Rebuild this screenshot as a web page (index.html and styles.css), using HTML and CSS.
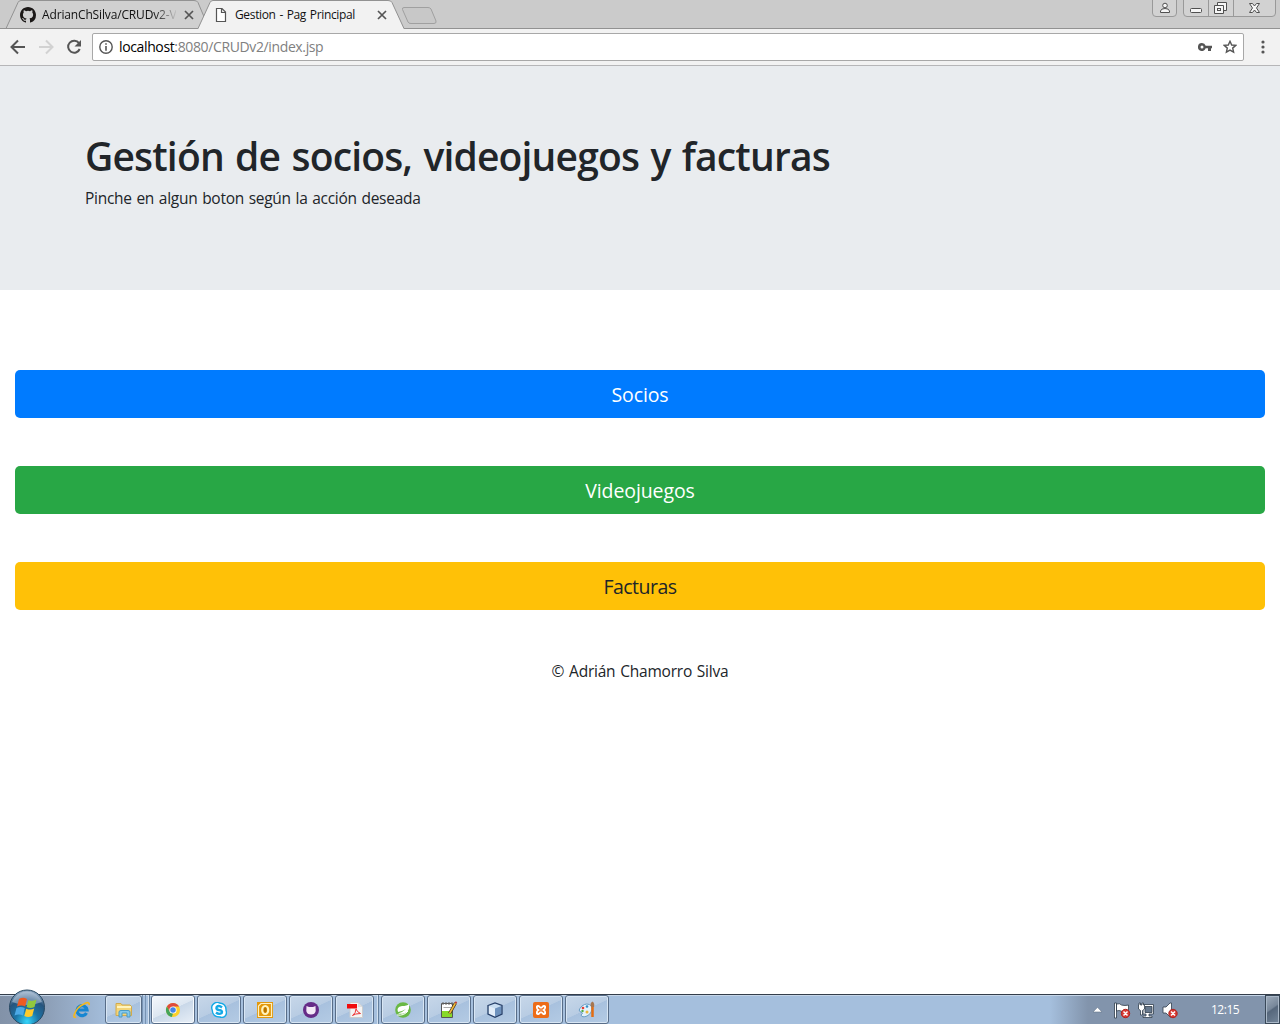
FILE: index.html
```html
<!DOCTYPE html>
<html lang="es">
<head>
<meta charset="utf-8">
<title>Gestion - Pag Principal</title>
<link rel="stylesheet" href="styles.css">
</head>
<body>
<header class="tabstrip">
  <svg class="tab-shapes" width="1280" height="29" viewBox="0 0 1280 29">
    <path d="M0 28.5H6L18 2.5Q19 .5 21 .5H194Q197 .5 198 2.5L209 28.5" fill="#d0d0d0" stroke="#929292"/>
    <path d="M0 28.5H1280" stroke="#929292"/>
    <path d="M198 29L210 2.5Q211 .5 213 .5H388Q391 .5 392 2.5L404 29Z" fill="#f2f2f2"/>
    <path d="M198 28.5L210 2.5Q211 .5 213 .5H388Q391 .5 392 2.5L404 28.5" fill="none" stroke="#929292"/>
    <path d="M404 7.5H428Q430 7.5 431 9L436 21Q436.500 23.500 434 23.500H411Q408.500 23.500 408 22L402.500 9.500Q402 7.500 404 7.500Z" fill="#c8c8c8" stroke="#a0a0a0"/>
    <g fill="#d2d2d2" stroke="#999">
      <path d="M1152.500 0V13Q1152.500 16.500 1156 16.500H1173Q1176.500 16.500 1176.500 13V0"/>
      <path d="M1183.500 0V13Q1183.500 16.500 1187 16.500H1272Q1275.500 16.500 1275.500 13V0M1208.500 0V16M1233.500 0V16"/>
    </g>
    <g fill="#f6f6f6" stroke="#505050">
      <circle cx="1165" cy="5.500" r="2.300"/><path d="M1160.500 12.500V11Q1161 8.500 1165 8.500T1169.500 11V12.500Z"/>
      <rect x="1190.500" y="8.500" width="11" height="4" rx="1"/>
      <path d="M1217.500 2.500H1226.500V10.500H1217.500Z"/><path d="M1214.500 5.500H1223.500V13.500H1214.500Z"/><rect x="1217.500" y="8.500" width="3" height="2"/>
      <path d="M1249.500 3.500H1252.500L1254.500 6L1256.500 3.500H1259.500L1256.500 8L1259.500 12.500H1256.500L1254.500 10L1252.500 12.500H1249.500L1252.500 8Z"/>
    </g>
  </svg>
  <div class="tab tab-first">
    <svg width="16" height="16" viewBox="0 0 16 16"><path fill="#1b1817" d="M8 0C3.580 0 0 3.580 0 8c0 3.540 2.290 6.530 5.470 7.590.4.070.55-.17.55-.38 0-.19-.01-.82-.01-1.490-2.010.37-2.530-.49-2.690-.94-.09-.23-.48-.94-.82-1.130-.28-.15-.68-.52-.01-.53.63-.01 1.080.58 1.230.82.72 1.210 1.870.87 2.330.66.07-.52.28-.87.51-1.070-1.780-.2-3.640-.89-3.640-3.950 0-.87.31-1.590.82-2.150-.08-.2-.36-1.020.08-2.120 0 0 .67-.21 2.200.82a7.500 7.500 0 014 0c1.530-1.040 2.200-.82 2.200-.82.44 1.100.16 1.920.08 2.120.51.56.82 1.270.82 2.150 0 3.070-1.870 3.750-3.650 3.950.29.25.54.73.54 1.480 0 1.070-.01 1.930-.01 2.200 0 .21.15.46.55.38A8.010 8.010 0 0016 8c0-4.420-3.580-8-8-8z"/></svg>
    <span class="tab-title faded">AdrianChSilva/CRUDv2-V</span>
    <svg class="close" width="10" height="10" viewBox="0 0 10 10"><path d="M1 1L9 9M9 1L1 9"/></svg>
  </div>
  <div class="tab tab-active">
    <svg width="16" height="16" viewBox="0 0 16 16"><path d="M3.500 1.500H9L12.500 5V14.500H3.500ZM8.500 1.500V5.500H12.500" fill="#fff" stroke="#555" stroke-width="1.200"/></svg>
    <span class="tab-title page-title">Gestion - Pag Principal</span>
    <svg class="close" width="10" height="10" viewBox="0 0 10 10"><path d="M1 1L9 9M9 1L1 9"/></svg>
  </div>
</header>
<nav class="toolbar">
  <svg class="nav-icons" width="92" height="36" viewBox="0 0 92 36"><g fill="none" stroke-width="2"><path d="M25 18H12M18 11.500L11.500 18L18 24.500" stroke="#555"/><path d="M39 18H52M46 11.500L52.500 18L46 24.500" stroke="#d2d2d2"/><path d="M79 14.200A6 6 0 1 0 79.700 20" stroke="#555"/></g><path d="M81 11V17.500H74.500Z" fill="#555"/></svg>
  <div class="address">
    <svg class="info" width="14" height="14" viewBox="0 0 14 14"><circle cx="7" cy="7" r="6.200" fill="none" stroke="#555" stroke-width="1.400"/><path d="M7 3.200V4.800M7 6V10.800" stroke="#555" stroke-width="1.600"/></svg>
    <span class="url">localhost<span class="path">:8080/CRUDv2/index.jsp</span></span>
    <svg class="key" width="14" height="8" viewBox="0 0 14 8"><path d="M4 0A4 4 0 1 0 7.700 5.300H10V8H13V5.300H14V2.700H7.700A4 4 0 0 0 4 0ZM4 2.500A1.500 1.500 0 1 1 4 5.500A1.500 1.500 0 1 1 4 2.500Z" fill="#555" fill-rule="evenodd"/></svg>
    <svg width="14" height="14" viewBox="0 0 14 14"><path d="M7 1.300L8.700 5L12.800 5.400L9.700 8.100L10.600 12.200L7 10.100L3.400 12.200L4.300 8.100L1.200 5.400L5.300 5Z" fill="none" stroke="#555" stroke-width="1.400"/></svg>
  </div>
  <svg class="menu-dots" width="4" height="14" viewBox="0 0 4 14" fill="#555"><circle cx="2" cy="2" r="1.600"/><circle cx="2" cy="7" r="1.600"/><circle cx="2" cy="12" r="1.600"/></svg>
</nav>
<main class="page">
  <section class="jumbotron">
    <h1><span>Gestión de socios, videojuegos y facturas</span></h1>
    <p><span>Pinche en algun boton según la acción deseada</span></p>
  </section>
  <div class="actions">
    <a class="btn primary"><span>Socios</span></a>
    <a class="btn success"><span>Videojuegos</span></a>
    <a class="btn warning"><span>Facturas</span></a>
  </div>
  <footer><span>© Adrián Chamorro Silva</span></footer>
</main>
<div class="taskbar">
  <svg class="orb" width="40" height="35" viewBox="0 0 40 35">
    <defs><radialGradient id="orb" cx=".5" cy=".9" r=".85"><stop offset="0" stop-color="#35d5fa"/><stop offset=".4" stop-color="#1b74a6"/><stop offset=".75" stop-color="#27547d"/><stop offset="1" stop-color="#8ba5bf"/></radialGradient></defs>
    <circle cx="20" cy="18.500" r="17.500" fill="url(#orb)" stroke="#284963"/>
    <path d="M5 13A16 16 0 0 1 35 13Q20 19 5 13Z" fill="#d4e1ed" opacity=".45"/>
    <path d="M12 10Q16 7.500 20 10L18.200 17.500Q14 15.500 10 17.500Z" fill="#ee5b23"/><path d="M21.500 11Q25 13 29.500 10.500L27.500 18Q23.500 20 19.600 18Z" fill="#91c83e"/><path d="M9.500 19Q13.500 17 17.800 19L16 26.500Q12 24.500 7.500 26.500Z" fill="#4ca9e6"/><path d="M19.200 19.700Q23.500 21.500 27.200 19.500L25.200 27Q21 29 17.300 27Z" fill="#ffcb2b"/>
  </svg>
  <div class="quick">
    <svg width="18" height="18" viewBox="0 0 18 18"><path d="M13.500 12A5 5 0 1 1 14 9H5" fill="none" stroke="#1686d2" stroke-width="3.200"/><path d="M3 16Q0 17 1.500 13Q4 6 11 3Q17 0 16 4" fill="none" stroke="#f3b71e" stroke-width="1.700"/></svg>
  </div>
  <div class="task explorer">
    <svg width="18" height="18" viewBox="0 0 18 18"><path d="M1 2.500H6L7 4H15L16.500 5.500V14.500H1Z" fill="#f3d478" stroke="#d2aa4b"/><path d="M2 6H16" stroke="#fff4be" stroke-width="2"/><path d="M4 16V11Q4 9.500 6 9.500H13Q15 9.500 15 11V16H12V12H7V16Z" fill="#83c9ec" stroke="#4a9bc6"/></svg>
  </div>
  <div class="stack two"></div>
  <div class="task current">
    <svg width="16" height="16" viewBox="0 0 16 16"><circle cx="8" cy="8" r="7" fill="#fcd12b"/><path d="M1.900 4.500A7 7 0 0 1 14.100 4.500H8L5 9.700Z" fill="#df4b3e"/><path d="M1.900 4.500L5 9.700L8 11.500L6.800 15A7 7 0 0 1 1.900 4.500Z" fill="#45a45a"/><circle cx="8" cy="8" r="3.600" fill="#fff"/><circle cx="8" cy="8" r="2.800" fill="#4486e8"/></svg>
  </div>
  <div class="task">
    <svg width="16" height="16" viewBox="0 0 16 16"><path d="M4.500 .7Q7 -.3 8.500 1Q15.500 1.500 15 8.500Q16.500 12 13.500 14.700Q11 16 9 15Q1.500 15 1.200 8Q-.7 3.200 4.500 .7Z" fill="#fff" stroke="#14a9e6" stroke-width="1.400"/><path d="M11 5.500Q8 3 5.700 5Q4.500 7.400 8 8Q12 8.500 10.700 11Q8 13 5 10.500" fill="none" stroke="#14a9e6" stroke-width="2.400"/></svg>
  </div>
  <div class="task">
    <svg width="16" height="16" viewBox="0 0 16 16"><path d="M0 0H16V16H0Z" fill="#e3980b"/><path d="M1.500 14.500V4L4 1.500H14.500V14.500Z" fill="none" stroke="#fff0bf" stroke-width="1.200"/><ellipse cx="8.200" cy="8" rx="3" ry="4" fill="none" stroke="#fff3bd" stroke-width="2.200"/><ellipse cx="8.200" cy="8" rx="1.400" ry="2.800" fill="#b77400"/></svg>
  </div>
  <div class="task">
    <svg width="16" height="16" viewBox="0 0 16 16"><circle cx="8" cy="8" r="8" fill="#662c88"/><path d="M3.500 4L6 5H10L12.500 4L12.700 9Q12 12.500 8 12.500T3.300 9Z" fill="#f3e9f7"/></svg>
  </div>
  <div class="task acrobat">
    <svg width="16" height="16" viewBox="0 0 16 16"><path d="M3 .5H11L15.500 5V15.500H3Z" fill="#f4f4f4" stroke="#ccc"/><path d="M11 .5V5H15.500" fill="#ddd"/><path d="M0 2H10V6.500H0Z" fill="#f20c0c"/><path d="M9 7Q9 11 5.500 13.500Q8 11.500 13.500 11.500Q10 10 9 7" fill="none" stroke="#e33" stroke-width="1"/></svg>
  </div>
  <div class="stack one"></div>
  <div class="task">
    <svg width="16" height="16" viewBox="0 0 16 16"><circle cx="8" cy="8" r="7.800" fill="#69b845"/><path d="M14 2Q15 10 9 11.500Q5 12 3 11.500Q8 10 11 7Q7 9.500 3 10Q1 5 7 4Q12 4 14 2Z" fill="#fff"/><path d="M2 13Q9 14 13 9" fill="none" stroke="#fff"/></svg>
  </div>
  <div class="task">
    <svg width="18" height="18" viewBox="0 0 18 18"><path d="M1.500 2.500H12.500V16.500H1.500Z" fill="#fff" stroke="#555"/><path d="M2 10H12V16H2Z" fill="#87d928"/><path d="M3 1V4M6 1V4M9 1V4M12 1V4" stroke="#666"/><path d="M3.500 6.500H11" stroke="#aaa"/><path d="M15.500 2L9.500 12.500" stroke="#3b3019" stroke-width="3"/><path d="M15.500 2L9.500 12.500" stroke="#f2b838" stroke-width="1.600"/><path d="M15.200 1L16.700 2" stroke="#c23b32" stroke-width="2"/></svg>
  </div>
  <div class="task">
    <svg width="16" height="16" viewBox="0 0 16 16"><path d="M1 3.500L8 1L15 3.500V12L8 15.300L1 12Z" fill="#c8ddf2"/><path d="M1.500 4L8 6.500V14.700L1.500 11.800Z" fill="#e2edf9"/><path d="M14.500 4L8 6.500V14.700L14.500 11.800Z" fill="#6d91bd"/><path d="M1 3.500L8 1L15 3.500V12L8 15.300L1 12Z" fill="none" stroke="#263f69" stroke-width="1.300"/></svg>
  </div>
  <div class="task">
    <svg width="16" height="16" viewBox="0 0 16 16"><rect width="16" height="16" rx="2" fill="#ed6c18"/><path d="M3 4.300Q4 2.500 6.200 3.300L8 5L9.800 3.300Q12 2.500 13 4.300Q13.500 6.500 12 8Q13.500 9.500 13 11.700Q12 13.500 9.800 12.700L8 11L6.200 12.700Q4 13.500 3 11.700Q2.500 9.500 4 8Q2.500 6.500 3 4.300Z" fill="#fff"/><path d="M5 5.500L6.800 7.200H9.200L11 5.500M5 10.500L6.800 8.800H9.200L11 10.500" fill="none" stroke="#ed6c18" stroke-width="1.300"/></svg>
  </div>
  <div class="task">
    <svg width="18" height="18" viewBox="0 0 18 18"><path d="M4 5Q9 1 13.500 5Q15 12 9 15Q4 17 3 14Q6 12 3 11Q-1 10 4 5Z" fill="#e4f1fa" stroke="#6b9fc5"/><circle cx="5" cy="7" r="1.300" fill="#e83c30"/><circle cx="9" cy="5.500" r="1.300" fill="#368ec8"/><circle cx="4.500" cy="10" r="1.200" fill="#4eac42"/><circle cx="9" cy="11" r="1.500" fill="#eeb53b"/><path d="M14.500 5V16" stroke="#e46d12" stroke-width="2.500"/><path d="M13 6Q11.500 2 14.500 .5Q17 2 16 6Z" fill="#a7764f"/></svg>
  </div>
  <div class="tray">
    <svg width="88" height="18" viewBox="0 0 88 18">
      <path d="M3 11L7.500 6.300L12 11Z" fill="#fff" stroke="#65758b" stroke-width=".6"/>
      <g stroke="#303d4b" stroke-width=".8" fill="#fff"><path d="M24.500 2H26.500V17H24.500ZM26.500 3Q30 2 31.500 4Q35 5 38.500 4V11Q34 12 31 10Q29 9 26.500 10Z"/><path d="M53 3.500H63.500V13H59V15H62V16.500H53V15H56V13H53Z"/><path d="M55 5.500H62V11.500H55Z" fill="#66788d"/><path d="M49 2H50.500V4H52V2H53.500V4H54.500V8L52.500 9.500V14H50.500V9.500L48.500 8V4H49Z"/><path d="M73 6H76L80 2H81.500V16H80L76 12H73Z"/></g>
      <g fill="#d93932" stroke="#af231f"><circle cx="35.500" cy="12.500" r="4.200"/><circle cx="83" cy="12.500" r="4.200"/></g><path d="M33.500 10.500L37.500 14.500M37.500 10.500L33.500 14.500M81 10.500L85 14.500M85 10.500L81 14.500" stroke="#fff" stroke-width="1.500"/>
    </svg>
    <span class="clock">12:15</span>
    <div class="show-desktop"></div>
  </div>
</div>
</body>
</html>
```
FILE: styles.css
```css
* { box-sizing: border-box; }
body { margin: 0; height: 1024px; display: flex; flex-direction: column; overflow: hidden; background: #fff; color: #212529; font: 16px/24px "Open Sans", "Noto Sans", sans-serif; }
svg { display: block; flex: none; }
.tabstrip { position: relative; height: 29px; flex: none; display: flex; background: #cbcbcb; }
.tab-shapes { position: absolute; left: 0; top: 0; }
.tab { position: relative; display: flex; align-items: center; height: 29px; font-size: 12px; line-height: 16px; color: #111; }
.tab-first { margin-left: 20px; width: 174px; }
.tab-active { margin-left: 19px; width: 174px; }
.tab-title { margin-left: 6px; white-space: nowrap; letter-spacing: -.15px; }
.faded { width: 134px; overflow: hidden; -webkit-mask-image: linear-gradient(90deg, #000 112px, transparent 136px); }
.page-title { letter-spacing: -.35px; word-spacing: 1px; }
.close { margin-left: auto; stroke: #555; stroke-width: 1.7; }
.toolbar { height: 37px; flex: none; display: flex; align-items: center; background: #f2f2f2; border-bottom: 1px solid #b6b6b8; }
.address { width: 1152px; height: 28px; display: flex; align-items: center; padding: 0 6px; background: #fff; border: 1px solid #a8a8a8; border-radius: 2px; font-size: 14px; line-height: 20px; }
.url { margin-left: 6px; color: #000; letter-spacing: -.37px; }
.path { color: #808080; }
.key { margin-left: auto; margin-right: 11px; }
.menu-dots { margin-left: 16.5px; }
.page { flex: 1; }
.jumbotron { height: 224px; background: #e9ecef; padding: 66px 85px 0; }
h1 { margin: 0 0 6px; font-size: 39px; line-height: 48px; font-weight: 600; letter-spacing: -.83px; word-spacing: 2px; white-space: nowrap; }
p { margin: 0; font-size: 15.5px; letter-spacing: -.28px; word-spacing: 1px; }
.actions { padding: 80px 15px 0; display: flex; flex-direction: column; gap: 48px; }
.btn { height: 48px; border-radius: 5px; display: flex; align-items: center; justify-content: center; font-size: 19.5px; line-height: 30px; color: #fff; letter-spacing: -.1px; padding-top: 1px; }
.primary { background: #007bff; }
.success { background: #28a745; }
.warning { background: #ffc107; color: #212529; letter-spacing: -.5px; }
footer { text-align: center; margin-top: 49px; font-size: 15.5px; letter-spacing: -.22px; word-spacing: 1px; }
.taskbar { height: 30px; flex: none; display: flex; align-items: stretch; border-top: 1px solid #343e4b; box-shadow: inset 0 1px #c5d5e7; background: linear-gradient(90deg, #8292a8 0, #8c9eb6 45px, #a5bfdd 110px, #a5bfdd 1050px, #8294ac 1088px, #8294ac 100%); }
.orb { margin: -6px 0 0 7px; }
.quick { width: 58px; padding: 6px 0 0 26px; }
.task { width: 44px; height: 29px; margin-right: 2px; border: 1px solid #586d88; border-radius: 3px; box-shadow: inset 0 0 0 1px #d8e6f4; background: linear-gradient(155deg, #c7d7e9 0, #b8cce3 49%, #a8c1de 50%, #b4cbe4 100%); display: flex; align-items: center; justify-content: center; }
.explorer { width: 37px; margin-right: 0; }
.current { background: linear-gradient(155deg, #f5f8fc 0, #dce6f1 49%, #c9d8e9 50%, #e8eff7 100%); box-shadow: inset 0 0 0 1px #f7fbff; }
.acrobat { width: 39px; margin-right: 0; }
.stack { border-right: 1px solid #64809e; box-shadow: inset -1px 0 #d3e1f0; }
.two { width: 8px; border-left: 4px double #7793b3; margin-right: 1px; }
.one { width: 5px; margin-right: 2px; }
.tray { margin-left: auto; display: flex; align-items: center; color: #fff; font-size: 12px; }
.clock { margin: 1px 24px 0 33px; letter-spacing: -.5px; width: 30px; white-space: nowrap; }
.show-desktop { width: 15px; height: 29px; border: 1px solid #394858; box-shadow: inset 0 0 0 1px #aab8c8; background: linear-gradient(145deg, #a0adbc 0, #77879a 45%, #56677c 50%, #74869a 100%); }
```
